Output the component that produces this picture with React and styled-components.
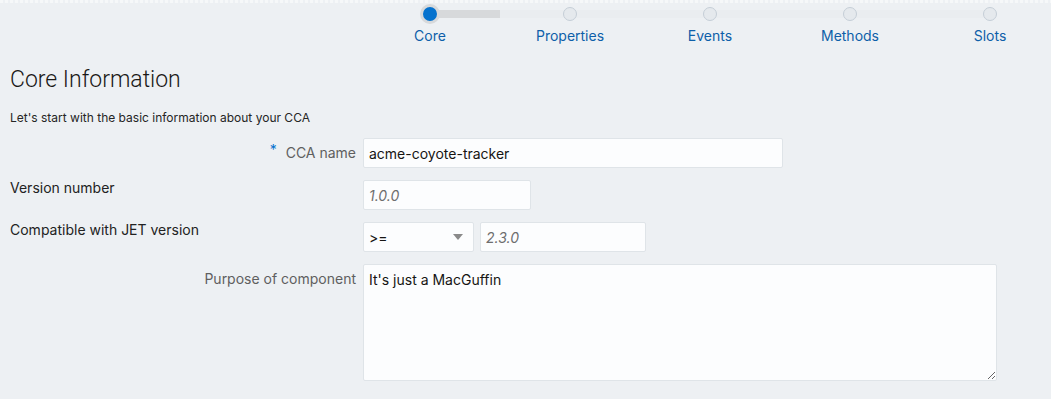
import React from 'react';
import styled, { createGlobalStyle } from 'styled-components';

const GlobalStyle = createGlobalStyle`
  html, body {
    margin: 0;
    padding: 0;
    background: #edf0f3;
    overflow: hidden;
  }
  body {
    font-family: Inter, "Liberation Sans", Arial, sans-serif;
    color: #161513;
  }
`;

const steps = ['Core', 'Properties', 'Events', 'Methods', 'Slots'];

const Page = styled.div`
  width: 1051px;
  height: 399px;
  position: relative;
`;

const TopEdge = styled.div`
  height: 3px;
  background: repeating-linear-gradient(90deg, #f6f8f9 0 3px, #eef1f4 3px 5px);
`;

const Train = styled.div`
  position: relative;
  display: grid;
  grid-template-columns: repeat(5, 140px);
  padding-left: 360px;
  height: 42px;
`;

const Track = styled.div`
  position: absolute;
  left: 430px;
  width: 560px;
  top: 7px;
  height: 8px;
  background: #eaedf0;
`;

const Progress = styled.div`
  position: absolute;
  left: 0;
  top: 0;
  width: 70px;
  height: 8px;
  background: #d7d9db;
`;

const Step = styled.div`
  position: relative;
  display: flex;
  flex-direction: column;
  align-items: center;
`;

const Dot = styled.div`
  box-sizing: border-box;
  margin-top: ${({ $active }) => ($active ? '1px' : '4px')};
  width: ${({ $active }) => ($active ? '20px' : '14px')};
  height: ${({ $active }) => ($active ? '20px' : '14px')};
  border-radius: 50%;
  background: ${({ $active }) => ($active ? '#0572ce' : '#e5e9ed')};
  border: ${({ $active }) => ($active ? '3px solid #d7d9db' : '1px solid #c5ced7')};
`;

const StepLabel = styled.div`
  margin-top: ${({ $active }) => ($active ? '3px' : '6px')};
  font-size: 14px;
  color: #0e5fa9;
`;

const Content = styled.div`
  padding: 0 10px;
`;

const Title = styled.h1`
  margin: 21px 0 0;
  font-family: Roboto, "Liberation Sans", sans-serif;
  font-weight: 300;
  font-size: 23px;
  line-height: 28px;
  color: #1a1816;
`;

const Intro = styled.p`
  margin: 16px 0 0;
  font-size: 12px;
  line-height: 16px;
  color: #252525;
`;

const Form = styled.div`
  margin-top: 12px;
  display: grid;
  grid-template-columns: 346px auto;
  column-gap: 7px;
  row-gap: 12px;
  align-items: start;
`;

const Label = styled.label`
  font-size: 14px;
  line-height: 16px;
  text-align: ${({ $start }) => ($start ? 'left' : 'right')};
  padding-top: ${({ $start }) => ($start ? '0' : '7px')};
  color: ${({ $start }) => ($start ? '#222' : '#5f5f5f')};
`;

const Required = styled.span`
  color: #0572ce;
  font-size: 14px;
  position: relative;
  top: -3px;
  margin-right: 9px;
`;

const Fields = styled.div`
  display: flex;
  gap: 6px;
`;

const Input = styled.input`
  box-sizing: border-box;
  width: ${({ $w }) => $w}px;
  height: 30px;
  padding: 0 5px;
  border: 1px solid #dfe4e8;
  border-radius: 2px;
  background: #fcfdfe;
  font-family: Inter, "Liberation Sans", Arial, sans-serif;
  font-size: 14px;
  color: #161513;
  outline: none;
  &::placeholder {
    color: #6e6e6e;
    font-style: italic;
  }
`;

const Select = styled.div`
  box-sizing: border-box;
  width: 111px;
  height: 30px;
  padding: 0 5px;
  display: flex;
  align-items: center;
  justify-content: space-between;
  border: 1px solid #dfe4e8;
  border-radius: 2px;
  background: #fcfdfe;
  font-size: 14px;
`;

const Caret = styled.span`
  width: 0;
  height: 0;
  margin-right: 5px;
  border-left: 5px solid transparent;
  border-right: 5px solid transparent;
  border-top: 6px solid #8a8a8a;
`;

const TextArea = styled.textarea`
  box-sizing: border-box;
  width: 634px;
  height: 117px;
  padding: 6px 5px;
  border: 1px solid #dfe4e8;
  border-radius: 2px;
  background: #fcfdfe;
  font-family: Inter, "Liberation Sans", Arial, sans-serif;
  font-size: 14px;
  color: #161513;
  outline: none;
`;

export default function App() {
  return (
    <Page>
      <GlobalStyle />
      <TopEdge />
      <Train>
        <Track>
          <Progress />
        </Track>
        {steps.map((s, i) => (
          <Step key={s}>
            <Dot $active={i === 0} />
            <StepLabel $active={i === 0}>{s}</StepLabel>
          </Step>
        ))}
      </Train>
      <Content>
        <Title>Core Information</Title>
        <Intro>Let's start with the basic information about your CCA</Intro>
        <Form>
          <Label>
            <Required>*</Required>CCA name
          </Label>
          <Fields>
            <Input $w={420} defaultValue="acme-coyote-tracker" />
          </Fields>
          <Label $start>Version number</Label>
          <Fields>
            <Input $w={168} placeholder="1.0.0" />
          </Fields>
          <Label $start>Compatible with JET version</Label>
          <Fields>
            <Select>
              <span>&gt;=</span>
              <Caret />
            </Select>
            <Input $w={166} placeholder="2.3.0" />
          </Fields>
          <Label>Purpose of component</Label>
          <Fields>
            <TextArea defaultValue="It's just a MacGuffin" />
          </Fields>
        </Form>
      </Content>
    </Page>
  );
}
